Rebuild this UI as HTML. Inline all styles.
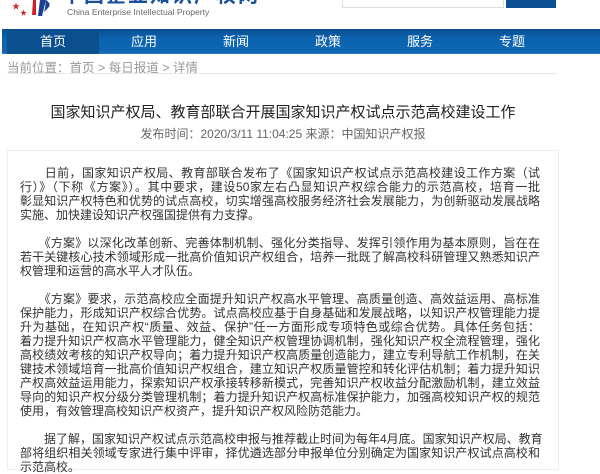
<!DOCTYPE html>
<html><head><meta charset="utf-8"><style>
*{margin:0;padding:0;box-sizing:border-box}
body{width:600px;height:450px;overflow:hidden;background:#fff;font-family:"Liberation Sans","Noto Sans CJK SC",sans-serif;position:relative}
.logo-cn{position:absolute;left:62px;top:-21px;font-size:20px;color:#1c4f9c;font-weight:bold;letter-spacing:2px;white-space:nowrap}
.logo-en{position:absolute;left:67px;top:7px;font-size:8.6px;color:#666;white-space:nowrap}
.search{position:absolute;left:342px;top:-2px;width:162px;height:10px;border:1px solid #ddd;border-top:none}
.btn{position:absolute;left:506px;top:0;width:50px;height:8px;background:#0a4f92}
.nav{position:absolute;left:2px;top:29px;width:598px;height:25px;background:linear-gradient(#0a4f8f,#0b63b0 40%,#1068b4);border-bottom:1px solid #2a7bc4}
.nav span{position:absolute;top:0;height:25px;line-height:25px;color:#fff;font-size:13px;width:92px;text-align:center}
.nav .on{background:#0b4f8e}
.crumb{position:absolute;left:7px;top:57px;font-size:12.5px;color:#999;white-space:nowrap}
.line{position:absolute;left:7px;top:73px;width:550px;height:1px;background:#e8e8e8}
.title{position:absolute;left:0;width:566px;top:101px;text-align:center;font-size:15px;color:#222;white-space:nowrap}
.date{position:absolute;left:0;width:566px;top:125px;text-align:center;font-size:12px;color:#666;white-space:nowrap}
.box{position:absolute;left:7px;top:150px;width:552px;height:320px;border:1px solid #eee;padding:15px 0 0 12px}
.box p{font-size:12px;line-height:14px;color:#333;margin-bottom:14px;white-space:nowrap}
.box p span{display:block;width:520px;text-align:justify;text-align-last:justify}
.box p span.l{text-align-last:left}
</style></head><body>
<svg style="position:absolute;left:8px;top:0" width="45" height="18" viewBox="0 0 45 18">
<path d="M32 0 L30 16 L34 16 L38 0Z" fill="#1c3f94"/><path d="M25 0 L24 15 L28 15 L28 0Z" fill="#d21f2a"/>
<path d="M38 0 Q44 4 40 8 L36 12 L37 8Z" fill="#1c3f94"/>
<text x="4" y="9" font-size="8" fill="#d21f2a">★</text><text x="12" y="15" font-size="7" fill="#d21f2a">★</text>
</svg>
<div class="logo-cn">中国企业知识产权网</div>
<div class="logo-en">China Enterprise Intellectual Property</div>
<div class="search"></div><div class="btn"></div>
<div class="nav">
<span class="on" style="left:5px">首页</span>
<span style="left:96px">应用</span>
<span style="left:188px">新闻</span>
<span style="left:280px">政策</span>
<span style="left:372px">服务</span>
<span style="left:464px">专题</span>
</div>
<div class="crumb">当前位置：首页 &gt; 每日报道 &gt; 详情</div>
<div class="line"></div>
<div class="title">国家知识产权局、教育部联合开展国家知识产权试点示范高校建设工作</div>
<div class="date">发布时间：2020/3/11 11:04:25 来源：中国知识产权报</div>
<div class="box">
<p><span>　　日前，国家知识产权局、教育部联合发布了《国家知识产权试点示范高校建设工作方案（试</span><span>行）》（下称《方案》）。其中要求，建设50家左右凸显知识产权综合能力的示范高校，培育一批</span><span>彰显知识产权特色和优势的试点高校，切实增强高校服务经济社会发展能力，为创新驱动发展战略</span><span class="l">实施、加快建设知识产权强国提供有力支撑。</span></p>
<p><span>　　《方案》以深化改革创新、完善体制机制、强化分类指导、发挥引领作用为基本原则，旨在在</span><span>若干关键核心技术领域形成一批高价值知识产权组合，培养一批既了解高校科研管理又熟悉知识产</span><span class="l">权管理和运营的高水平人才队伍。</span></p>
<p><span>　　《方案》要求，示范高校应全面提升知识产权高水平管理、高质量创造、高效益运用、高标准</span><span>保护能力，形成知识产权综合优势。试点高校应基于自身基础和发展战略，以知识产权管理能力提</span><span>升为基础，在知识产权“质量、效益、保护”任一方面形成专项特色或综合优势。具体任务包括：</span><span>着力提升知识产权高水平管理能力，健全知识产权管理协调机制，强化知识产权全流程管理，强化</span><span>高校绩效考核的知识产权导向；着力提升知识产权高质量创造能力，建立专利导航工作机制，在关</span><span>键技术领域培育一批高价值知识产权组合，建立知识产权质量管控和转化评估机制；着力提升知识</span><span>产权高效益运用能力，探索知识产权承接转移新模式，完善知识产权收益分配激励机制，建立效益</span><span>导向的知识产权分级分类管理机制；着力提升知识产权高标准保护能力，加强高校知识产权的规范</span><span class="l">使用，有效管理高校知识产权资产，提升知识产权风险防范能力。</span></p>
<p><span>　　据了解，国家知识产权试点示范高校申报与推荐截止时间为每年4月底。国家知识产权局、教育</span><span>部将组织相关领域专家进行集中评审，择优遴选部分申报单位分别确定为国家知识产权试点高校和</span><span class="l">示范高校。</span></p>
</div>
</body></html>
